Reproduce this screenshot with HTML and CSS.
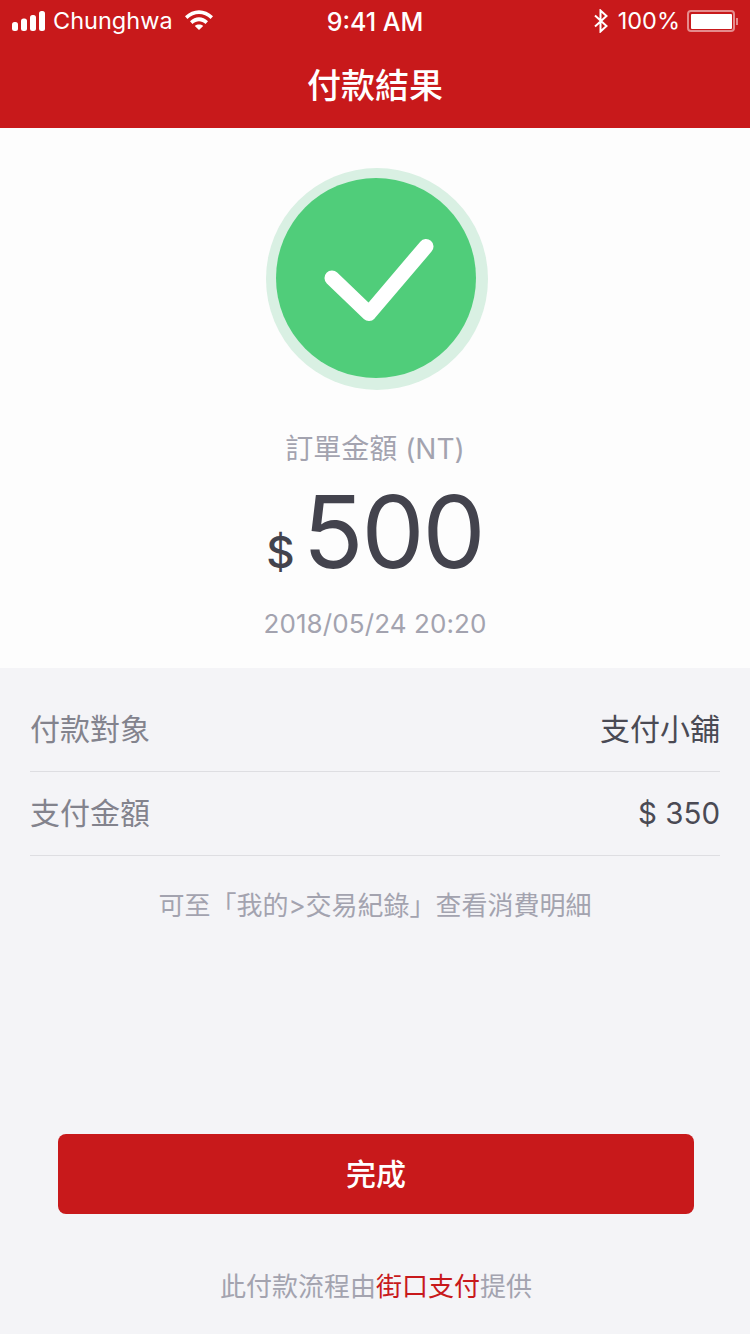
FILE: index.html
```html
<!DOCTYPE html>
<html lang="zh-Hant">
<head>
<meta charset="utf-8">
<title>付款結果</title>
<link rel="stylesheet" href="styles.css">
</head>
<body>
	<div class="top">
		<div class="statusBar">
			<div class="statusLeft">
				<svg class="signal" width="34" height="20" viewBox="0 0 34 20">
					<rect x="0" y="11" width="6" height="9" rx="2.5"/>
					<rect x="9" y="7.5" width="6" height="12.5" rx="2.5"/>
					<rect x="18" y="4" width="6" height="16" rx="2.5"/>
					<rect x="27" y="0" width="6" height="20" rx="2.5"/>
				</svg>
				<span class="carrier">Chunghwa</span>
				<svg class="wifi" width="28" height="20" viewBox="0 0 28 20">
					<path d="M0 6.300C8-1.900 20-1.900 28 6.300L25.600 8.900C18.800 2.200 9.200 2.200 2.400 8.900Z"/>
					<path d="M5 11.300C10.500 6 17.500 6 23 11.300L20.500 13.900C16.500 10.300 11.500 10.300 7.500 13.900Z"/>
					<path d="M9.800 16C12.300 14.100 15.700 14.100 18.200 16L14 20Z"/>
				</svg>
			</div>
			<div class="statusTime">9:41 AM</div>
			<div class="statusRight">
				<svg class="bt" width="16" height="24" viewBox="0 0 16 24">
					<path d="M2 6.500L13.500 17L7.500 22.500V1.500L13.500 7L2 17.500" fill="none" stroke="#fff" stroke-width="2"/>
				</svg>
				<span class="percent">100%</span>
				<div class="battery"><div class="batteryFill"></div></div>
				<div class="batteryTip"></div>
			</div>
		</div>
		<div class="navTitle">付款結果</div>
	</div>

	<div class="summary">
		<div class="okRing">
			<div class="okCircle">
				<svg width="200" height="200" viewBox="0 0 200 200">
					<path d="M56 100L93 135.500L150 68.500" fill="none" stroke="#fff" stroke-width="15" stroke-linecap="round" stroke-linejoin="round"/>
				</svg>
			</div>
		</div>
		<div class="sumLabel">訂單金額 (NT)</div>
		<div class="sumAmount"><span class="sumSign">$</span><span class="sumNum">500</span></div>
		<div class="sumDate">2018/05/24 20:20</div>
	</div>

	<div class="detail">
		<div class="row">
			<span class="rowName">付款對象</span>
			<span class="rowVal">支付小舖</span>
		</div>
		<div class="row">
			<span class="rowName">支付金額</span>
			<span class="rowVal rowNum">$ 350</span>
		</div>
		<p class="tip">可至「我的&gt;交易紀錄」查看消費明細</p>
		<div class="doneBtn">完成</div>
		<p class="foot">此付款流程由<span class="brand">街口支付</span>提供</p>
	</div>
</body>
</html>
```

FILE: styles.css
```css
*{ padding:0; margin:0; box-sizing:border-box;}

body{ width:750px; height:1334px; overflow:hidden; background:#F4F4F7; font-family:"Inter","Noto Sans CJK TC",sans-serif;}

.top{ height:128px; background:#C8191B; color:#FFF;}
.statusBar{ height:40px; padding:2px 12px 0 12px; display:grid; grid-template-columns:1fr auto 1fr; align-items:center;}
.statusLeft{ display:flex; align-items:center;}
.signal{ fill:#FFF;}
.carrier{ font-size:23.500px; margin-left:7px; line-height:30px;}
.wifi{ fill:#FFF; margin-left:12px; margin-bottom:2px;}
.statusTime{ font-size:25px; font-weight:500; line-height:30px; padding-top:1px;}
.statusRight{ display:flex; align-items:center; justify-content:flex-end;}
.percent{ font-size:23.500px; margin-left:9px; line-height:30px;}
.battery{ width:48px; height:22px; margin-left:7px; padding:1.500px; border:2px solid #E58C8D; border-radius:4px;}
.batteryFill{ height:100%; background:#FFF; border-radius:1px;}
.batteryTip{ width:2px; height:7px; margin-left:1px; background:#E58C8D;}
.navTitle{ height:88px; padding-top:4px; line-height:84px; font-size:34px; font-weight:500; text-align:center;}

.summary{ height:540px; padding-top:40px; background:#FDFDFD; display:flex; flex-direction:column; align-items:center;}
.okRing{ width:222px; height:222px; margin-left:4px; padding:10px; border-radius:50%; background:#D9F0E3;}
.okCircle{ width:200px; height:200px; border-radius:50%; background:#50CD7A;}
.okCircle svg{ display:block;}
.sumLabel{ margin-top:41px; font-size:28px; line-height:36px; color:#A3A3AF;}
.sumAmount{ margin-top:16px; height:98px; display:flex; align-items:baseline; color:#43434D;}
.sumSign{ font-size:44px; font-weight:500; margin-right:8px;}
.sumNum{ font-size:100px; letter-spacing:-2px; line-height:98px; font-weight:400;}
.sumDate{ margin-top:25px; font-size:26px; letter-spacing:.1px; line-height:36px; color:#A3A3AF;}

.detail{ padding:20px 30px 0;}
.row{ height:84px; padding-bottom:6px; border-bottom:1px solid #DEDEE2; display:flex; justify-content:space-between; align-items:center; font-size:30px;}
.rowName{ color:#83838D;}
.rowVal{ color:#4A4A54;}
.rowNum{ font-size:29.500px; padding-top:4px;}
.tip{ margin-top:31px; font-size:26px; line-height:38px; text-align:center; color:#A3A3AF;}
.doneBtn{ width:636px; height:80px; margin:209px 0 0 28px; line-height:80px; text-align:center; font-size:30px; font-weight:500; color:#FFF; background:#C8191B; border-radius:8px;}
.foot{ margin-top:54px; padding-left:2px; font-size:26px; line-height:38px; text-align:center; color:#A3A3AF;}
.brand{ color:#C8191B;}
```
